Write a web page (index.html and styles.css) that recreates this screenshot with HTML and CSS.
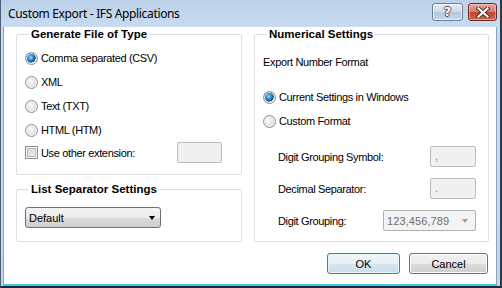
FILE: index.html
```html
<!DOCTYPE html>
<html>
<head>
<meta charset="utf-8">
<link rel="stylesheet" href="styles.css">
</head>
<body>
<div class="window">
  <div class="titlebar">
    <div class="title">Custom Export - IFS Applications</div>
    <div class="caption-buttons">
      <div class="cap-btn help"><span class="qmark">?</span></div>
      <div class="cap-btn close">
        <svg width="14" height="11" viewBox="0 0 14 11">
          <path d="M2.5 1.5 L11.5 9.5 M11.5 1.5 L2.5 9.5" stroke="#3b2a2a" stroke-width="4" stroke-linecap="square"/>
          <path d="M2.5 1.5 L11.5 9.5 M11.5 1.5 L2.5 9.5" stroke="#ffffff" stroke-width="2.2" stroke-linecap="square"/>
        </svg>
      </div>
    </div>
  </div>
  <div class="client">
    <div class="columns">
      <div class="left-col">
        <div class="group group-type">
          <div class="group-title">Generate File of Type</div>
          <div class="group-body">
            <div class="option"><span class="radio checked"></span><span>Comma separated (CSV)</span></div>
            <div class="option"><span class="radio"></span><span>XML</span></div>
            <div class="option"><span class="radio"></span><span>Text (TXT)</span></div>
            <div class="option"><span class="radio"></span><span>HTML (HTM)</span></div>
            <div class="option ext-row"><span class="check"></span><span class="ext-label">Use other extension:</span><span class="textbox ext-box"></span></div>
          </div>
        </div>
        <div class="group group-list">
          <div class="group-title">List Separator Settings</div>
          <div class="group-body">
            <div class="combo"><span>Default</span><span class="arrow"></span></div>
          </div>
        </div>
      </div>
      <div class="group group-num">
        <div class="group-title">Numerical Settings</div>
        <div class="group-body">
          <div class="plain-label">Export Number Format</div>
          <div class="num-options">
            <div class="option"><span class="radio checked"></span><span>Current Settings in Windows</span></div>
            <div class="option"><span class="radio"></span><span>Custom Format</span></div>
          </div>
          <div class="fields">
            <div class="field"><span>Digit Grouping Symbol:</span><span class="textbox small-box">,</span></div>
            <div class="field"><span>Decimal Separator:</span><span class="textbox small-box">.</span></div>
            <div class="field"><span>Digit Grouping:</span><span class="combo disabled"><span>123,456,789</span><span class="arrow"></span></span></div>
          </div>
        </div>
      </div>
    </div>
    <div class="footer">
      <div class="btn default">OK</div>
      <div class="btn cancel">Cancel</div>
    </div>
  </div>
</div>
</body>
</html>
```

FILE: styles.css
```css
* { box-sizing: border-box; }
html, body { margin: 0; padding: 0; }
body {
  width: 502px;
  height: 288px;
  overflow: hidden;
  font-family: "Liberation Sans", Arial, sans-serif;
  font-size: 11px;
  color: #000;
  background: #fff;
}
.window {
  width: 502px;
  height: 288px;
  display: flex;
  flex-direction: column;
  background: linear-gradient(#bcd1e9, #cadcf0 30px, #c3d7ec);
  border-left: 1px solid #4c6178;
  border-right: 2px solid #2b3a4a;
  border-bottom: 2px solid #1e2a36;
  padding: 0 3px 0 2px;
}
.titlebar {
  height: 27px;
  flex: none;
  display: flex;
  align-items: flex-start;
  justify-content: space-between;
}
.title {
  font-family: "Noto Sans", "Open Sans", sans-serif;
  font-size: 12px;
  line-height: 16px;
  padding: 6px 0 0 5px;
  color: #000;
  letter-spacing: -0.35px;
}
.caption-buttons {
  display: flex;
  gap: 5px;
  padding-top: 3px;
}
.cap-btn {
  height: 18px;
  border-radius: 3px;
  display: flex;
  align-items: center;
  justify-content: center;
}
.help {
  width: 31px;
  border: 1px solid #6e7f93;
  background: linear-gradient(#e3ecf6, #cbd9ea 50%, #b6c8de 51%, #c6d6e9);
  box-shadow: inset 0 0 0 1px rgba(255,255,255,0.6);
}
.qmark {
  font-family: "DejaVu Sans", sans-serif;
  font-weight: bold;
  font-size: 13px;
  line-height: 14px;
  color: #fff;
  text-shadow: 1px 0 0 #4a5563, -1px 0 0 #4a5563, 0 1px 0 #4a5563, 0 -1px 0 #4a5563;
}
.close {
  width: 29px;
  border: 1px solid #6b2b25;
  background: linear-gradient(#e7a89c, #d7796b 50%, #c4422f 51%, #d0684f);
  box-shadow: inset 0 0 0 1px rgba(255,220,210,0.5);
}
.client {
  flex: 1;
  background: #fff;
  border: 1px solid #8ea3bb;
  border-top: none;
  border-bottom: 2px solid #46c6ea;
  padding: 0 8px 10px 12px;
  display: flex;
  flex-direction: column;
}
.columns {
  display: grid;
  grid-template-columns: 226px 235px;
  column-gap: 12px;
  padding-top: 7px;
}
.left-col {
  display: flex;
  flex-direction: column;
  gap: 14px;
}
.group {
  border: 1px solid #dcdfe3;
  border-radius: 2px;
  display: flex;
  flex-direction: column;
  align-items: flex-start;
}
.group-title {
  font-weight: bold;
  font-size: 11.5px;
  line-height: 14px;
  height: 14px;
  margin: -8px 0 0 12px;
  padding: 0 2px;
  background: #fff;
}
.group-body {
  align-self: stretch;
  padding: 0 12px 0 8px;
}
.group-type { height: 141px; }
.group-type .group-body { padding-top: 5px; }
.group-list { height: 53px; }
.group-list .group-body { padding-top: 11px; }
.group-num { height: 208px; }
.group-num .group-body { padding-top: 11px; }

.option {
  height: 24px;
  display: flex;
  align-items: center;
  gap: 3px;
  letter-spacing: -0.35px;
}
.radio {
  width: 13px;
  height: 13px;
  flex: none;
  border-radius: 50%;
  border: 1px solid #8e8f8f;
  background: radial-gradient(circle at 40% 40%, #fbfbfb 0, #e6e6e6 45%, #cfcfcf 100%);
  box-shadow: inset 0 0 0 1px #f4f4f4;
}
.radio.checked {
  background:
    radial-gradient(circle at 42% 40%, #9fdcf8 0, #2d8bc9 30%, #0f4e8b 55%, transparent 58%),
    radial-gradient(circle at 40% 40%, #fbfbfb 0, #e6e6e6 45%, #cfcfcf 100%);
}
.check {
  width: 13px;
  height: 13px;
  flex: none;
  border: 1px solid #8e8f8f;
  background: linear-gradient(135deg, #d3d3d3, #f6f6f6);
  box-shadow: inset 0 0 0 1px #f4f4f4, inset 0 0 0 2px #b9b9b9;
}
.ext-row { height: 21px; }
.ext-label { flex: 1; }
.textbox {
  display: flex;
  align-items: flex-end;
  height: 21px;
  border: 1px solid #bcbcbc;
  border-radius: 2px;
  background: #f0f0f0;
  color: #777;
  padding: 0 0 4px 4px;
  font-size: 11px;
}
.ext-box { width: 45px; margin-right: 7px; }
.small-box { width: 46px; }

.combo {
  width: 136px;
  height: 21px;
  border: 1px solid #707070;
  border-radius: 3px;
  background: linear-gradient(#f4f4f4, #ebebeb 50%, #dddddd 51%, #cfcfcf);
  display: flex;
  align-items: center;
  justify-content: space-between;
  padding: 0 5px 0 3px;
  font-size: 11px;
}
.arrow {
  width: 0;
  height: 0;
  border-left: 3.5px solid transparent;
  border-right: 3.5px solid transparent;
  border-top: 4px solid #000;
}
.combo.disabled {
  width: 93px;
  background: #f4f4f4;
  border-color: #adb2b5;
  border-radius: 2px;
  color: #6d6d6d;
  padding-right: 7px;
  letter-spacing: 0.1px;
}
.combo.disabled .arrow { border-top-color: #a0a0a0; }

.plain-label {
  height: 20px;
  line-height: 20px;
  letter-spacing: -0.35px;
}
.num-options { margin-top: 13px; }
.fields {
  margin-top: 13px;
  padding-left: 15px;
  display: flex;
  flex-direction: column;
  gap: 11px;
}
.field {
  height: 21px;
  display: flex;
  align-items: center;
  justify-content: space-between;
  letter-spacing: -0.35px;
}
.footer {
  margin-top: 11px;
  display: flex;
  justify-content: flex-end;
  gap: 9px;
}
.btn {
  height: 21px;
  border-radius: 3px;
  display: flex;
  align-items: center;
  justify-content: center;
  font-size: 11px;
}
.btn.default {
  width: 73px;
  border: 1px solid #3c7fb1;
  background: linear-gradient(#f2f8fc, #e5eff6 50%, #d6e6f0 51%, #cadde9);
  box-shadow: inset 0 0 0 1px #e6f6fd;
}
.btn.cancel {
  width: 79px;
  border: 1px solid #707070;
  background: linear-gradient(#f2f2f2, #ebebeb 50%, #dddddd 51%, #cfcfcf);
  box-shadow: inset 0 0 0 1px #fcfcfc;
}
```
